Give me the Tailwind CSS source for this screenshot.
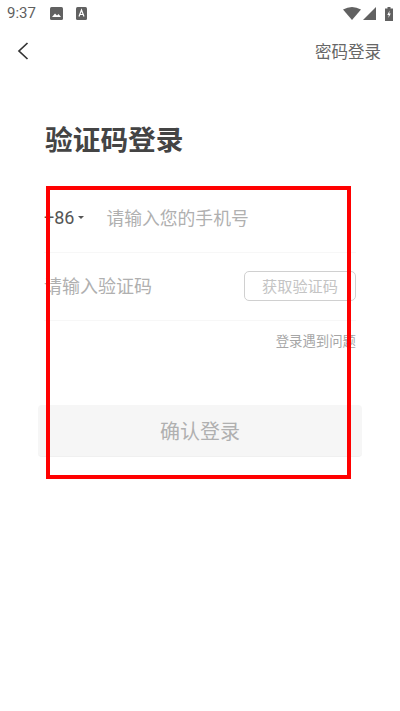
<!DOCTYPE html>
<html lang="zh-CN">

<head>
  <meta charset="UTF-8">
  <meta name="viewport" content="width=device-width, initial-scale=1.0">
  <title>验证码登录</title>
  <script src="https://cdn.jsdelivr.net/npm/@tailwindcss/browser@4"></script>
</head>

<body class="bg-white font-['Noto_Sans_CJK_SC','Noto_Sans',sans-serif]">
  <div class="relative w-[400px] h-[711px] overflow-hidden">
    <!-- status bar -->
    <div class="flex items-center h-[27px] pl-[7px] pr-[7px] text-[#5f5f5f]">
      <span class="font-['Roboto',sans-serif] text-[15px] leading-none">9:37</span>
      <svg class="ml-[14px]" width="13" height="13" viewBox="0 0 13 13">
        <rect width="13" height="13" rx="1.5" fill="#616161" />
        <path d="M2 10 L5 6.5 L7 8.5 L8.5 7 L11 10 Z" fill="#fff" />
      </svg>
      <svg class="ml-[13px]" width="11" height="13" viewBox="0 0 11 13">
        <rect width="11" height="13" rx="1.5" fill="#616161" />
        <path d="M3 9.5 L5.5 3 L8 9.5 M4 7.5 H7" fill="none" stroke="#fff" stroke-width="1.2" />
      </svg>
      <svg class="ml-auto" width="18" height="13" viewBox="0 0 18 13">
        <path d="M0 2.5 Q9 -2.5 18 2.5 L9 13 Z" fill="#616161" />
      </svg>
      <svg class="ml-[2px]" width="13" height="13" viewBox="0 0 13 13">
        <path d="M13 0 V13 H0 Z" fill="#616161" />
      </svg>
      <svg class="ml-[9px]" width="8" height="14" viewBox="0 0 8 14">
        <path d="M2.5 0 H5.5 V1.5 H8 V14 H0 V1.5 H2.5 Z" fill="#616161" />
        <path d="M4.6 3.5 L2.3 8 H3.8 L3.4 11 L5.8 6.6 H4.2 Z" fill="#fff" />
      </svg>
    </div>

    <!-- nav -->
    <div class="flex items-center justify-between h-[48px] pl-[17px] pr-[19px]">
      <svg width="12" height="18" viewBox="0 0 12 18">
        <path d="M10.5 1 L2 9 L10.5 17" fill="none" stroke="#333" stroke-width="1.7" />
      </svg>
      <span class="text-[16.5px] leading-none text-[#666]">密码登录</span>
    </div>

    <h1 class="mt-[44px] pl-[45px] text-[27.7px] leading-[38px] font-semibold text-[#444]">验证码登录</h1>

    <!-- form -->
    <div class="mt-[28px] pl-[44px] pr-[44px]">
      <div class="flex items-center h-[68px] pb-[2px] border-b border-[#f7f7f7]">
        <span class="font-['Roboto',sans-serif] text-[18px] text-[#555]">+86</span>
        <span class="ml-[4px] mt-[-1px] w-0 h-0 border-x-[3.5px] border-x-transparent border-t-[3px] border-t-[#555]"></span>
        <span class="ml-[22px] text-[17.8px] text-[#b0b0b0]">请输入您的手机号</span>
      </div>
      <div class="flex items-center justify-between h-[68px] pb-[2px] border-b border-[#f7f7f7]">
        <span class="text-[18px] text-[#b0b0b0]">请输入验证码</span>
        <button type="button" class="flex items-center justify-center w-[112px] h-[30px] rounded-[5px] border border-[#d0d0d0] text-[15.2px] text-[#c4c4c4]">获取验证码</button>
      </div>
      <p class="mt-[9px] text-right text-[13.4px] leading-[20px] text-[#a6a6a6]">登录遇到问题</p>
    </div>

    <div class="mx-[38px] mt-[55px] flex items-center justify-center h-[52px] rounded-[4px] bg-[#f6f6f6] border-b border-[#f0f0f0] text-[20px] text-[#b0b0b0]">确认登录</div>

    <!-- highlight box -->
    <div class="absolute left-[46px] top-[186px] w-[305px] h-[293px] border-4 border-[#ff0000]"></div>
  </div>
</body>

</html>
